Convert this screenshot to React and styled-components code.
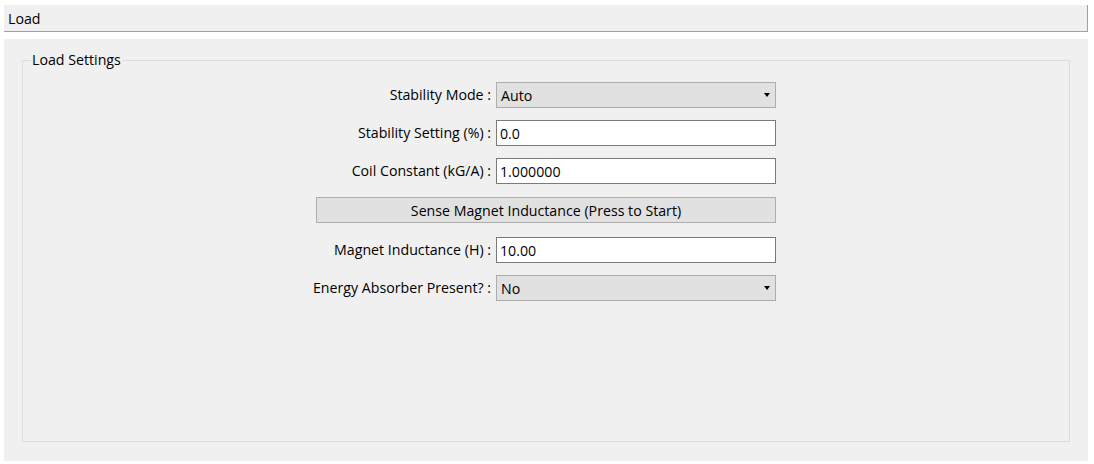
import React from "react";
import styled, { createGlobalStyle } from "styled-components";

const GlobalStyle = createGlobalStyle`
  html, body {
    margin: 0;
    padding: 0;
    background: #ffffff;
  }
  body {
    font-family: "Open Sans", "Noto Sans", "DejaVu Sans", sans-serif;
    font-size: 14.2px;
    color: #000000;
  }
  * { box-sizing: border-box; }
`;

const Page = styled.div`
  width: 1088px;
  padding: 5px 0 0 4px;
  display: flex;
  flex-direction: column;
  gap: 7px;
`;

const Header = styled.div`
  height: 27px;
  background: #f0f0f0;
  border-right: 1px solid #a0a0a0;
  border-bottom: 1px solid #a0a0a0;
  padding-left: 4px;
  display: flex;
  align-items: center;
`;

const Panel = styled.div`
  height: 422px;
  background: #f0f0f0;
  padding: 12px 18px 19px 18px;
  display: flex;
  flex-direction: column;
`;

const Group = styled.fieldset`
  flex: 1;
  margin: 0;
  min-width: 0;
  border: 1px solid #dcdcdc;
  padding: 13px 8px 0 8px;
`;

const Legend = styled.legend`
  padding: 0 1px;
  line-height: 18px;
`;

const Form = styled.div`
  display: grid;
  grid-template-columns: 175px 280px;
  column-gap: 5px;
  row-gap: 12px;
  justify-content: center;
  align-items: center;
`;

const Label = styled.div`
  justify-self: end;
  text-align: right;
  white-space: nowrap;
  line-height: 20px;
`;

const Dropdown = styled.div`
  height: 26px;
  background: #e1e1e1;
  border: 1px solid #adadad;
  padding: 0 5px 0 4px;
  display: flex;
  align-items: center;
  justify-content: space-between;
`;

const Arrow = styled.span`
  width: 0;
  height: 0;
  border-left: 3.5px solid transparent;
  border-right: 3.5px solid transparent;
  border-top: 4px solid #000000;
`;

const TextBox = styled.input`
  height: 26px;
  width: 100%;
  background: #ffffff;
  border: 1px solid #7a7a7a;
  border-radius: 0;
  padding: 0 3px;
  font: inherit;
  color: #000000;
  outline: none;
`;

const WideButton = styled.button`
  grid-column: 1 / -1;
  height: 26px;
  margin: 1px 0 2px;
  background: #e1e1e1;
  border: 1px solid #adadad;
  border-radius: 0;
  font: inherit;
  color: #000000;
  padding: 0;
`;

const rows = [
  { label: "Stability Mode :", kind: "select", value: "Auto" },
  { label: "Stability Setting (%) :", kind: "text", value: "0.0" },
  { label: "Coil Constant (kG/A) :", kind: "text", value: "1.000000" },
  { kind: "button", value: "Sense Magnet Inductance (Press to Start)" },
  { label: "Magnet Inductance (H) :", kind: "text", value: "10.00" },
  { label: "Energy Absorber Present? :", kind: "select", value: "No" },
];

export default function App() {
  return (
    <>
      <GlobalStyle />
      <Page>
        <Header>Load</Header>
        <Panel>
          <Group>
            <Legend>Load Settings</Legend>
            <Form>
              {rows.map((r, i) => {
                if (r.kind === "button") {
                  return <WideButton key={i}>{r.value}</WideButton>;
                }
                return (
                  <React.Fragment key={i}>
                    <Label>{r.label}</Label>
                    {r.kind === "select" ? (
                      <Dropdown>
                        <span>{r.value}</span>
                        <Arrow />
                      </Dropdown>
                    ) : (
                      <TextBox defaultValue={r.value} />
                    )}
                  </React.Fragment>
                );
              })}
            </Form>
          </Group>
        </Panel>
      </Page>
    </>
  );
}
